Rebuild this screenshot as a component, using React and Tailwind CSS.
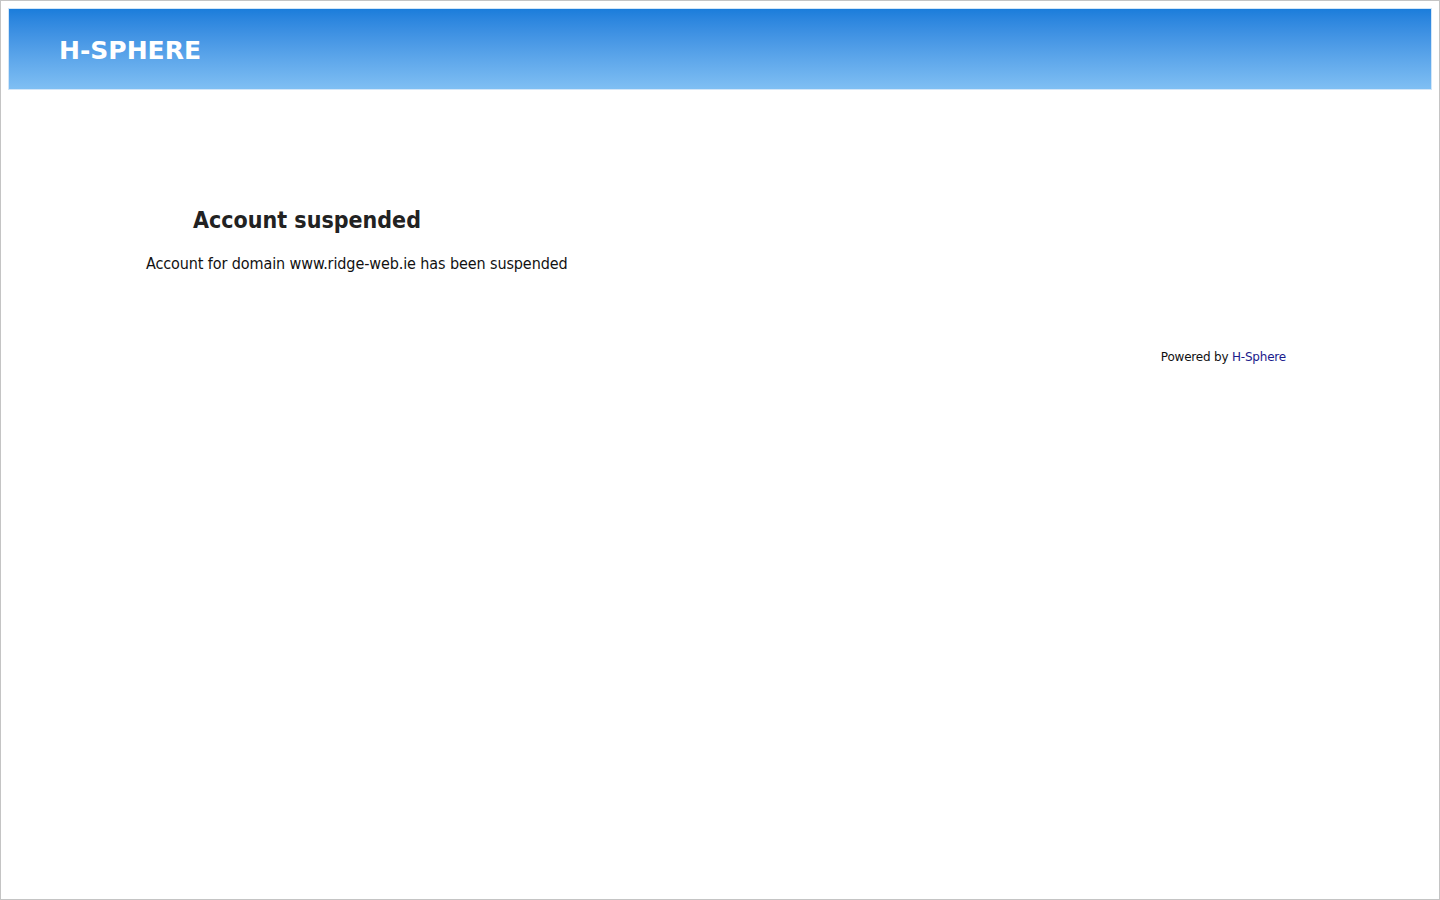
export default function App() {
  return (
    <div className="w-[1440px] h-[900px] bg-white border border-[#c4c4c4] box-border flex flex-col font-['DejaVu_Sans',Tahoma,sans-serif]">
      <div className="mx-[7px] mt-[7px] border border-[#d2e6f8] p-0">
        <div className="h-[80px] bg-gradient-to-b from-[#1a7ddb] to-[#7fbff3] flex items-center pl-[50px] pt-[3px]">
          <span className="text-white font-bold text-[25px]">H-SPHERE</span>
        </div>
      </div>
      <div className="font-['DejaVu_Sans_Condensed','DejaVu_Sans',sans-serif] [font-stretch:condensed]">
        <div className="pl-[192px] pt-[115px]">
          <h1 className="text-[23px] font-bold text-[#222] leading-[30px]">Account suspended</h1>
        </div>
        <div className="pl-[145px] pt-[19px]">
          <p className="text-[16px] text-[#111] leading-[20px] tracking-[-0.1px]">Account for domain www.ridge-web.ie has been suspended</p>
        </div>
      </div>
      <div className="flex justify-end pr-[153px] pt-[74px]">
        <p className="text-[12px] text-[#111] tracking-[-0.2px]">Powered by <span className="text-[#1a1a8c]">H-Sphere</span></p>
      </div>
    </div>
  );
}
